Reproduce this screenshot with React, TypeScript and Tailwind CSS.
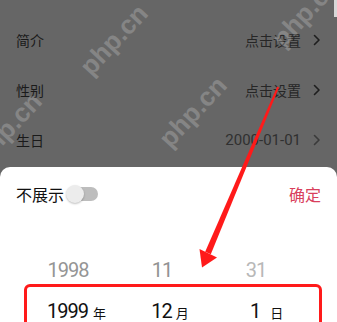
import React from "react";

const Chevron = ({ color = "#1e1e1e" }: { color?: string }) => (
  <svg width="8" height="12" viewBox="0 0 8 12" className="ml-[12px]">
    <path d="M1.5 1.5 L6 6 L1.5 10.5" fill="none" stroke={color} strokeWidth="1.6" strokeLinecap="round" strokeLinejoin="round" />
  </svg>
);

const Watermark = ({ x, y, o = 0.2 }: { x: number; y: number; o?: number }) => (
  <span
    className="pointer-events-none absolute -translate-x-1/2 -translate-y-1/2 rotate-[-47deg] whitespace-nowrap text-[26px] font-bold text-white"
    style={{ left: x, top: y, opacity: o, fontFamily: '"Liberation Sans", Arial, sans-serif' }}
  >
    php.cn
  </span>
);

export default function App() {
  const rows = [
    { l: "简介", r: "点击设置", rc: "#262626", cc: "#1e1e1e" },
    { l: "性别", r: "点击设置", rc: "#262626", cc: "#1e1e1e" },
    { l: "生日", r: "2000-01-01", rc: "#303030", cc: "#3a3a3a" },
  ];
  return (
    <div
      className="relative h-[322px] w-[337px] overflow-hidden bg-[#666666]"
      style={{ fontFamily: 'Roboto, "Noto Sans CJK SC", sans-serif' }}
    >
      <div className="absolute right-0 top-0 h-[17px] w-[3px] bg-[#d8d8d8]" />
      <div className="pt-[15px]">
        {rows.map((r) => {
          const isDate = r.r.startsWith("2");
          return (
            <div key={r.l} className="flex h-[50px] items-center justify-between pl-4 pr-[16px]">
              <span className="text-[14px] text-[#1a1a1a]" style={{ fontFamily: '"Noto Sans CJK SC", sans-serif' }}>
                {r.l}
              </span>
              <div className="flex items-center">
                <span
                  className={isDate ? "text-[15px]" : "text-[14px]"}
                  style={{ color: r.rc, fontFamily: isDate ? "Roboto, sans-serif" : '"Noto Sans CJK SC", sans-serif' }}
                >
                  {r.r}
                </span>
                <Chevron color={r.cc} />
              </div>
            </div>
          );
        })}
      </div>
      <div className="mt-[2px] h-[200px] rounded-t-[10px] bg-white">
        <div className="flex h-[54px] items-center justify-between pl-4 pr-[16px]">
          <div className="flex items-center">
            <span className="text-[16px] text-[#111]" style={{ fontFamily: '"Noto Sans CJK SC", sans-serif' }}>不展示</span>
            <div className="relative ml-[2px] flex h-[18px] w-[32px] items-center">
              <div className="ml-[4px] h-[14px] w-[28px] rounded-full bg-[#bdbdbd]" />
              <div className="absolute left-0 top-0 h-[18px] w-[18px] rounded-full bg-[#ececec] shadow-[0_1px_2px_rgba(0,0,0,0.25)]" />
            </div>
          </div>
          <span className="text-[16px] text-[#d9405c]" style={{ fontFamily: '"Noto Sans CJK SC", sans-serif' }}>确定</span>
        </div>
        <div className="pt-[28px] pl-[21px]">
          <div className="flex h-[41px] items-center text-[20px] tracking-[-1px]">
            <div className="flex w-[94px] justify-center text-[#959595]">1998</div>
            <div className="flex w-[94px] justify-center text-[#929292]">11</div>
            <div className="flex w-[94px] justify-center text-[#b8b8b8]">31</div>
          </div>
          <div className="flex h-[41px] items-center text-[20px] tracking-[-1px] text-[#111]">
            <div className="flex w-[94px] items-baseline justify-center">
              <span className="ml-[-1px]">1999</span>
              <span className="inline-block w-0">
                <span className="whitespace-nowrap pl-[5px] text-[13px] tracking-normal" style={{ fontFamily: '"Noto Sans CJK SC", sans-serif' }}>年</span>
              </span>
            </div>
            <div className="flex w-[94px] items-baseline justify-center">
              <span className="ml-[-1px]">12</span>
              <span className="inline-block w-0">
                <span className="whitespace-nowrap pl-[4px] text-[13px] tracking-normal" style={{ fontFamily: '"Noto Sans CJK SC", sans-serif' }}>月</span>
              </span>
            </div>
            <div className="flex w-[94px] items-baseline justify-center">
              <span className="ml-[-2px]">1</span>
              <span className="inline-block w-0">
                <span className="whitespace-nowrap pl-[10px] text-[13px] tracking-normal" style={{ fontFamily: '"Noto Sans CJK SC", sans-serif' }}>日</span>
              </span>
            </div>
          </div>
        </div>
      </div>

      <Watermark x={114} y={40} />
      <Watermark x={306} y={12} />
      <Watermark x={193} y={112} />
      <Watermark x={8} y={128} />

      <div className="pointer-events-none absolute left-[24px] top-[284px] h-[60px] w-[298px] rounded-[6px] border-[3px] border-[#ff1a1a]" />
      <svg className="pointer-events-none absolute left-0 top-0" width="337" height="322" viewBox="0 0 337 322">
        <polygon points="277.2,86.6 279,87.4 210.8,254.2 205.2,251.8" fill="#ff1a1a" />
        <polygon points="199.5,249 217,257.5 202,267.5" fill="#ff1a1a" />
      </svg>
    </div>
  );
}
